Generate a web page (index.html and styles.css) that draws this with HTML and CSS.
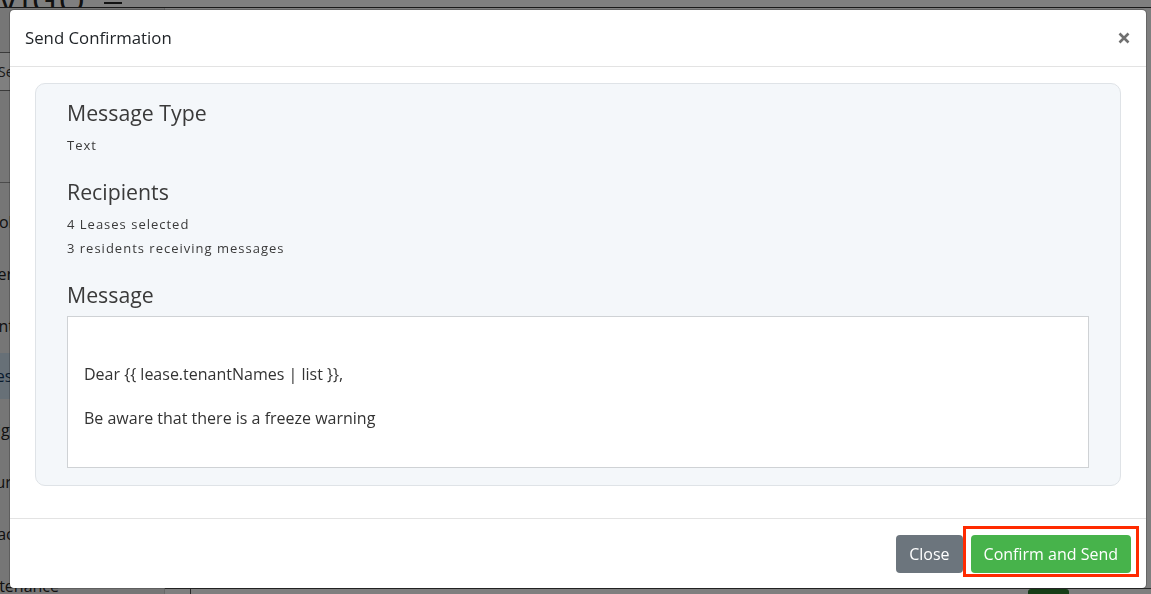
FILE: index.html
```html
<!DOCTYPE html>
<html lang="en">
<head>
<meta charset="utf-8">
<title>Send Confirmation</title>
<link rel="stylesheet" href="styles.css">
</head>
<body>
<div class="page">
  <header class="topbar">
    <div class="logo">VIGO</div>
    <div class="burger"><span></span><span></span></div>
    <div class="topmain"></div>
  </header>
  <aside class="sidebar">
    <div class="search">Search</div>
    <div class="side-label">Menus</div>
    <nav class="side-nav">
      <div class="side-item">Portfolio</div>
      <div class="side-item">Properties</div>
      <div class="side-item">Tenants</div>
      <div class="side-item active">Leases</div>
      <div class="side-item">Configuration</div>
      <div class="side-item">Procurement</div>
      <div class="side-item">Contacts</div>
      <div class="side-item">Maintenance</div>
    </nav>
  </aside>
  <main class="main">
    <div class="main-spacer"></div>
    <div class="table-row">
      <div class="cell c1"></div>
      <div class="cell c2"></div>
      <div class="cell c3"><span class="green-btn"></span></div>
    </div>
  </main>
</div>

<div class="backdrop"></div>

<div class="modal-layer">
  <div class="modal">
    <div class="modal-header">
      <h5 class="modal-title">Send Confirmation</h5>
      <button class="close-x" type="button" aria-label="Close">
        <svg width="12" height="12" viewBox="0 0 12 12"><path d="M1.5 1.5 L10.5 10.5 M10.5 1.5 L1.5 10.5" stroke="#707070" stroke-width="2.6" stroke-linecap="butt"/></svg>
      </button>
    </div>
    <div class="modal-body">
      <div class="summary-card">
        <section class="section">
          <h3 class="sec-title">Message Type</h3>
          <p class="sec-line">Text</p>
        </section>
        <section class="section">
          <h3 class="sec-title">Recipients</h3>
          <p class="sec-line">4 Leases selected</p>
          <p class="sec-line">3 residents receiving messages</p>
        </section>
        <section class="section">
          <h3 class="sec-title">Message</h3>
          <div class="message-box">
            <p class="msg-line">Dear {{ lease.tenantNames | list }},</p>
            <p class="msg-line">Be aware that there is a freeze warning</p>
          </div>
        </section>
      </div>
    </div>
    <div class="modal-footer">
      <button class="btn btn-gray" type="button">Close</button>
      <button class="btn btn-green" type="button">Confirm and Send</button>
    </div>
  </div>
</div>

<div class="highlight-box"></div>
</body>
</html>
```

FILE: styles.css
```css
* { box-sizing: border-box; }

html, body {
  margin: 0;
  padding: 0;
  height: 100%;
  overflow: hidden;
}

body {
  font-family: "Open Sans", "Noto Sans", sans-serif;
  color: #333;
  background: #fff;
}

/* ---------- background page ---------- */
.page {
  display: grid;
  grid-template-columns: 165px 1fr;
  grid-template-rows: 8px 1fr;
  height: 594px;
}

.topbar {
  grid-column: 1 / 3;
  display: flex;
  align-items: flex-end;
  border-bottom: 1px solid #333;
  overflow: hidden;
  background: #fff;
}

.logo {
  font-size: 34px;
  line-height: 34px;
  margin-bottom: -10px;
  letter-spacing: 2px;
  color: #222;
  width: 100px;
  margin-left: -2px;
}

.burger {
  width: 18px;
  display: flex;
  flex-direction: column;
  gap: 4px;
  margin-bottom: -3px;
  margin-left: 6px;
}
.burger span {
  display: block;
  height: 2px;
  background: #222;
}

.topmain {
  flex: 1;
  height: 100%;
  margin-left: 45px;
  border-top-left-radius: 30px;
  background: #fff;
}

.sidebar {
  background: #ececec;
  border-right: 1px solid #d0d0d0;
  overflow: hidden;
  padding-top: 44px;
}

.search {
  height: 39px;
  border-top: 1px solid #777;
  border-bottom: 1px solid #777;
  background: #fff;
  font-size: 14px;
  line-height: 37px;
  color: #333;
  margin-left: -2px;
}

.side-label {
  font-size: 11px;
  margin-top: 68px;
  margin-left: -35px;
  color: #555;
  height: 24px;
  border-bottom: 1px solid #999;
}

.side-nav {
  display: flex;
  flex-direction: column;
  padding-top: 13px;
}

.side-item {
  height: 52px;
  line-height: 52px;
  font-size: 16px;
  color: #222;
  margin-left: -38px;
  white-space: nowrap;
}

.side-item.active {
  background: #cfe0ef;
  color: #12395e;
  height: 46px;
  line-height: 46px;
  margin-top: 1px;
  margin-bottom: 5px;
}

.main {
  display: flex;
  flex-direction: column;
  background: #fff;
}

.main-spacer { flex: 1; }

.table-row {
  display: flex;
  height: 6px;
  border-top: 1px solid #555;
}
.cell { height: 100%; }
.c1 { width: 26px; border-right: 1px solid #555; }
.c2 { width: 837px; }
.c3 { flex: 1; }
.green-btn {
  display: block;
  width: 41px;
  height: 6px;
  background: #2f7a2f;
  border-radius: 3px 3px 0 0;
}

.backdrop {
  position: fixed;
  inset: 0;
  background: rgba(0, 0, 0, 0.5);
}

/* ---------- modal ---------- */
.modal-layer {
  position: fixed;
  inset: 0;
  padding: 9px 4px 5px 9px;
  display: flex;
}

.modal {
  width: 1138px;
  height: 580px;
  background: #fff;
  border: 1px solid rgba(0, 0, 0, 0.2);
  border-radius: 5px;
  display: flex;
  flex-direction: column;
  background-clip: padding-box;
}

.modal-header {
  height: 57px;
  flex: none;
  display: flex;
  align-items: center;
  justify-content: space-between;
  padding: 0 16px 0 15px;
  border-bottom: 1px solid #e3e3e3;
}

.modal-title {
  margin: 0;
  font-size: 16.8px;
  font-weight: 400;
  color: #212529;
  line-height: 24px;
}

.close-x {
  border: 0;
  background: none;
  padding: 0;
  width: 12px;
  height: 12px;
  display: flex;
  cursor: pointer;
}

.modal-body {
  flex: 1;
  padding: 16px 25px 32px 25px;
}

.summary-card {
  background: #f4f7fa;
  border: 1px solid #dfe3e7;
  border-radius: 10px;
  padding: 16px 31px 17px 31px;
  height: 403px;
}

.section + .section { margin-top: 22px; }

.sec-title {
  margin: 0 0 8px 0;
  font-size: 21.3px;
  line-height: 25px;
  font-weight: 400;
  color: #3a3a3a;
}

.sec-line {
  margin: 0;
  font-size: 13px;
  line-height: 24px;
  letter-spacing: 1px;
  color: #3a3a3a;
}

.message-box {
  margin-top: 9px;
  height: 152px;
  background: #fff;
  border: 1px solid #cfd2d5;
  padding: 46px 16px 0 16px;
}

.msg-line {
  margin: 0 0 22px 0;
  font-size: 16px;
  line-height: 22px;
  color: #333;
}

.modal-footer {
  height: 71px;
  flex: none;
  border-top: 1px solid #e3e3e3;
  display: flex;
  align-items: center;
  justify-content: flex-end;
  gap: 8px;
  padding: 0 15px;
}

.btn {
  height: 38px;
  border: 0;
  border-radius: 4px;
  color: #fff;
  font-family: "Open Sans", "Noto Sans", sans-serif;
  font-size: 16px;
  padding: 0 13px;
  cursor: pointer;
}

.btn-gray { background: #6c757d; }
.btn-green { background: #47b34b; }

/* annotation overlay */
.highlight-box {
  position: fixed;
  left: 963px;
  top: 526px;
  width: 176px;
  height: 51px;
  border: 3px solid #ff2a00;
}
```
